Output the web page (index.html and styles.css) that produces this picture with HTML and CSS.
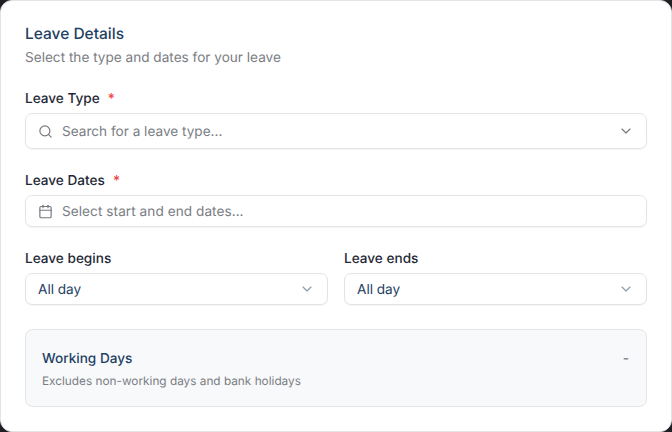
FILE: index.html
```html
<!DOCTYPE html>
<html lang="en">
<head>
<meta charset="utf-8">
<title>Leave Details</title>
<link rel="stylesheet" href="styles.css">
</head>
<body>
<main class="card">
  <header class="head">
    <h1 class="title">Leave Details</h1>
    <p class="sub">Select the type and dates for your leave</p>
  </header>
  <div class="field type-field">
    <div class="label">Leave Type <span class="req">*</span></div>
    <div class="control tall">
      <svg class="icon" viewBox="0 0 24 24"><circle cx="11" cy="11" r="8"/><path d="m21 21-4.3-4.3"/></svg>
      <span class="placeholder">Search for a leave type...</span>
      <svg class="chev" viewBox="0 0 24 24"><path d="m6 9 6 6 6-6"/></svg>
    </div>
  </div>
  <div class="field dates-field">
    <div class="label">Leave Dates <span class="req">*</span></div>
    <div class="control">
      <svg class="icon" viewBox="0 0 24 24"><path d="M8 2v4"/><path d="M16 2v4"/><rect x="3" y="4" width="18" height="18" rx="2"/><path d="M3 10h18"/></svg>
      <span class="placeholder wide">Select start and end dates...</span>
    </div>
  </div>
  <div class="pair">
    <div class="field">
      <div class="label">Leave begins</div>
      <div class="control select">
        <span class="value">All day</span>
        <svg class="chev pale" viewBox="0 0 24 24"><path d="m6 9 6 6 6-6"/></svg>
      </div>
    </div>
    <div class="field">
      <div class="label">Leave ends</div>
      <div class="control select">
        <span class="value">All day</span>
        <svg class="chev pale" viewBox="0 0 24 24"><path d="m6 9 6 6 6-6"/></svg>
      </div>
    </div>
  </div>
  <section class="summary">
    <div class="summary-row">
      <span class="summary-title">Working Days</span>
      <span class="summary-value">-</span>
    </div>
    <p class="summary-note">Excludes non-working days and bank holidays</p>
  </section>
</main>
</body>
</html>
```
FILE: styles.css
```css
* { box-sizing: border-box; }
html, body { margin: 0; height: 100%; }
body { background: #1f2023; font-family: Inter, "Liberation Sans", sans-serif; overflow: hidden; text-rendering: geometricPrecision; }
.card {
  width: 672px; height: 432px;
  background: #fff;
  border: 1px solid #e3e4e7;
  border-radius: 12px;
  padding: 24px 24px 0;
}
.head { height: 64px; }
.title { margin: 0; font-size: 15.5px; line-height: 18px; font-weight: 500; color: #1e4163; }
.sub { margin: 6px 0 0; font-size: 13.6px; line-height: 18px; color: #7a7d83; }
.field { display: flex; flex-direction: column; }
.label { font-size: 13.6px; line-height: 18px; padding-top: 1px; font-weight: 500; color: #1f2937; height: 24px; }
.req { color: #ef4444; margin-left: 4.5px; }
.control {
  display: flex; align-items: center;
  height: 32px;
  background: #fff;
  border: 1px solid #e2e4e8;
  border-radius: 7px;
  box-shadow: 0 1px 1px rgba(0,0,0,.04);
  padding: 0 12px;
}
.control.tall { height: 36px; }
.type-field { margin-bottom: 22px; }
.dates-field { margin-bottom: 22px; }
.icon { width: 15px; height: 15px; fill: none; stroke: #75787e; stroke-width: 1.9; stroke-linecap: round; stroke-linejoin: round; flex: none; margin-right: 9px; }
.placeholder { font-size: 13.6px; line-height: 18px; padding-top: 1px; color: #7a7d83; flex: 1; }
.placeholder.wide { letter-spacing: 0.06px; }
.value { font-size: 13.6px; line-height: 18px; padding-top: 1px; color: #1e4163; flex: 1; }
.chev { width: 16px; height: 16px; fill: none; stroke: #75787e; stroke-width: 1.75; stroke-linecap: round; stroke-linejoin: round; flex: none; }
.chev.pale { stroke: #8b9bb0; }
.pair { display: grid; grid-template-columns: 303px 303px; gap: 16px; }
.summary {
  margin-top: 24px;
  height: 78px;
  background: #f8f9fb;
  border: 1px solid #e2e4e8;
  border-radius: 8px;
  padding: 16px;
}
.summary-row { display: flex; justify-content: space-between; align-items: center; height: 24px; }
.summary-title { font-size: 13.6px; line-height: 18px; padding-top: 1px; font-weight: 500; color: #1e4163; }
.summary-value { font-size: 13.6px; line-height: 18px; padding-top: 1px; font-weight: 500; color: #7a7d83; padding-right: 1px; }
.summary-note { margin: 3px 0 0; font-size: 11.8px; line-height: 16px; color: #7a7d83; }
```
